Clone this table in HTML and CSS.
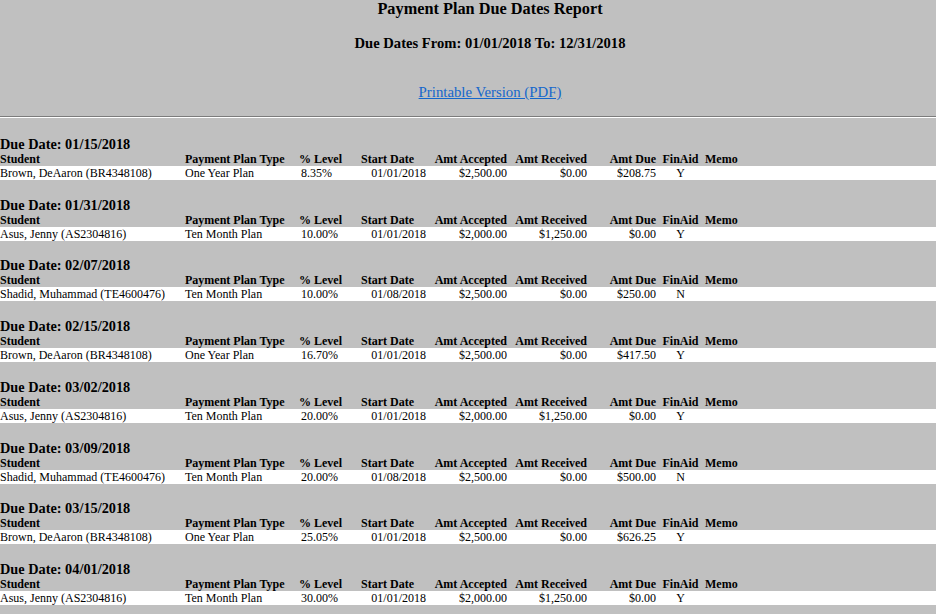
FILE: index.html
```html
<!DOCTYPE html>
<html>
<head>
<meta charset="utf-8">
<title>Payment Plan Due Dates Report</title>
<link rel="stylesheet" href="styles.css">
</head>
<body>
<div class="top">
  <div class="title">Payment Plan Due Dates Report</div>
  <div class="range">Due Dates From: 01/01/2018 To: 12/31/2018</div>
  <div class="print"><a href="#">Printable Version (PDF)</a></div>
</div>
<div class="rule"></div>

<section class="group">
  <div class="due">Due Date: 01/15/2018</div>
  <div class="row head"><span>Student</span><span>Payment Plan Type</span><span>% Level</span><span>Start Date</span><span class="r">Amt Accepted</span><span class="r">Amt Received</span><span class="r">Amt Due</span><span class="c">FinAid</span><span>Memo</span></div>
  <div class="row data"><span>Brown, DeAaron (BR4348108)</span><span>One Year Plan</span><span class="pct">8.35%</span><span class="r">01/01/2018</span><span class="r">$2,500.00</span><span class="r">$0.00</span><span class="r">$208.75</span><span class="c">Y</span><span></span></div>
</section>

<section class="group">
  <div class="due">Due Date: 01/31/2018</div>
  <div class="row head"><span>Student</span><span>Payment Plan Type</span><span>% Level</span><span>Start Date</span><span class="r">Amt Accepted</span><span class="r">Amt Received</span><span class="r">Amt Due</span><span class="c">FinAid</span><span>Memo</span></div>
  <div class="row data"><span>Asus, Jenny (AS2304816)</span><span>Ten Month Plan</span><span class="pct">10.00%</span><span class="r">01/01/2018</span><span class="r">$2,000.00</span><span class="r">$1,250.00</span><span class="r">$0.00</span><span class="c">Y</span><span></span></div>
</section>

<section class="group">
  <div class="due">Due Date: 02/07/2018</div>
  <div class="row head"><span>Student</span><span>Payment Plan Type</span><span>% Level</span><span>Start Date</span><span class="r">Amt Accepted</span><span class="r">Amt Received</span><span class="r">Amt Due</span><span class="c">FinAid</span><span>Memo</span></div>
  <div class="row data"><span>Shadid, Muhammad (TE4600476)</span><span>Ten Month Plan</span><span class="pct">10.00%</span><span class="r">01/08/2018</span><span class="r">$2,500.00</span><span class="r">$0.00</span><span class="r">$250.00</span><span class="c">N</span><span></span></div>
</section>

<section class="group">
  <div class="due">Due Date: 02/15/2018</div>
  <div class="row head"><span>Student</span><span>Payment Plan Type</span><span>% Level</span><span>Start Date</span><span class="r">Amt Accepted</span><span class="r">Amt Received</span><span class="r">Amt Due</span><span class="c">FinAid</span><span>Memo</span></div>
  <div class="row data"><span>Brown, DeAaron (BR4348108)</span><span>One Year Plan</span><span class="pct">16.70%</span><span class="r">01/01/2018</span><span class="r">$2,500.00</span><span class="r">$0.00</span><span class="r">$417.50</span><span class="c">Y</span><span></span></div>
</section>

<section class="group">
  <div class="due">Due Date: 03/02/2018</div>
  <div class="row head"><span>Student</span><span>Payment Plan Type</span><span>% Level</span><span>Start Date</span><span class="r">Amt Accepted</span><span class="r">Amt Received</span><span class="r">Amt Due</span><span class="c">FinAid</span><span>Memo</span></div>
  <div class="row data"><span>Asus, Jenny (AS2304816)</span><span>Ten Month Plan</span><span class="pct">20.00%</span><span class="r">01/01/2018</span><span class="r">$2,000.00</span><span class="r">$1,250.00</span><span class="r">$0.00</span><span class="c">Y</span><span></span></div>
</section>

<section class="group">
  <div class="due">Due Date: 03/09/2018</div>
  <div class="row head"><span>Student</span><span>Payment Plan Type</span><span>% Level</span><span>Start Date</span><span class="r">Amt Accepted</span><span class="r">Amt Received</span><span class="r">Amt Due</span><span class="c">FinAid</span><span>Memo</span></div>
  <div class="row data"><span>Shadid, Muhammad (TE4600476)</span><span>Ten Month Plan</span><span class="pct">20.00%</span><span class="r">01/08/2018</span><span class="r">$2,500.00</span><span class="r">$0.00</span><span class="r">$500.00</span><span class="c">N</span><span></span></div>
</section>

<section class="group">
  <div class="due">Due Date: 03/15/2018</div>
  <div class="row head"><span>Student</span><span>Payment Plan Type</span><span>% Level</span><span>Start Date</span><span class="r">Amt Accepted</span><span class="r">Amt Received</span><span class="r">Amt Due</span><span class="c">FinAid</span><span>Memo</span></div>
  <div class="row data"><span>Brown, DeAaron (BR4348108)</span><span>One Year Plan</span><span class="pct">25.05%</span><span class="r">01/01/2018</span><span class="r">$2,500.00</span><span class="r">$0.00</span><span class="r">$626.25</span><span class="c">Y</span><span></span></div>
</section>

<section class="group">
  <div class="due">Due Date: 04/01/2018</div>
  <div class="row head"><span>Student</span><span>Payment Plan Type</span><span>% Level</span><span>Start Date</span><span class="r">Amt Accepted</span><span class="r">Amt Received</span><span class="r">Amt Due</span><span class="c">FinAid</span><span>Memo</span></div>
  <div class="row data"><span>Asus, Jenny (AS2304816)</span><span>Ten Month Plan</span><span class="pct">30.00%</span><span class="r">01/01/2018</span><span class="r">$2,000.00</span><span class="r">$1,250.00</span><span class="r">$0.00</span><span class="c">Y</span><span></span></div>
</section>
</body>
</html>
```

FILE: styles.css
```css
html, body {
  margin: 0;
  padding: 0;
  background: #c0c0c0;
}
body {
  font-family: "Liberation Serif", "Times New Roman", serif;
  color: #000;
}
.top {
  text-align: center;
  padding-left: 44px;
}
.title {
  font-size: 16.3px;
  font-weight: bold;
  line-height: 18px;
}
.range {
  font-size: 14.6px;
  font-weight: bold;
  line-height: 16px;
  margin-top: 17px;
}
.print {
  font-size: 14.8px;
  line-height: 16px;
  margin-top: 33px;
}
.print a {
  color: #1467cc;
}
.rule {
  margin-top: 16px;
  height: 0;
  border-top: 1px solid #7c7c7c;
  border-bottom: 1px solid #ffffff;
}
.group {
  margin-top: 16.71px;
}
.group:first-of-type {
  margin-top: 18px;
}
.due {
  font-size: 14.3px;
  font-weight: bold;
  line-height: 16px;
}
.row {
  display: grid;
  grid-template-columns: 185px 114px 62px 65px 81px 80px 69px 49px 1fr;
  font-size: 12px;
  line-height: 14px;
  white-space: nowrap;
}
.head {
  font-weight: bold;
}
.data {
  background: #fff;
}
.r { text-align: right; }
.c { text-align: center; }
.pct { padding-left: 2px; }
```
